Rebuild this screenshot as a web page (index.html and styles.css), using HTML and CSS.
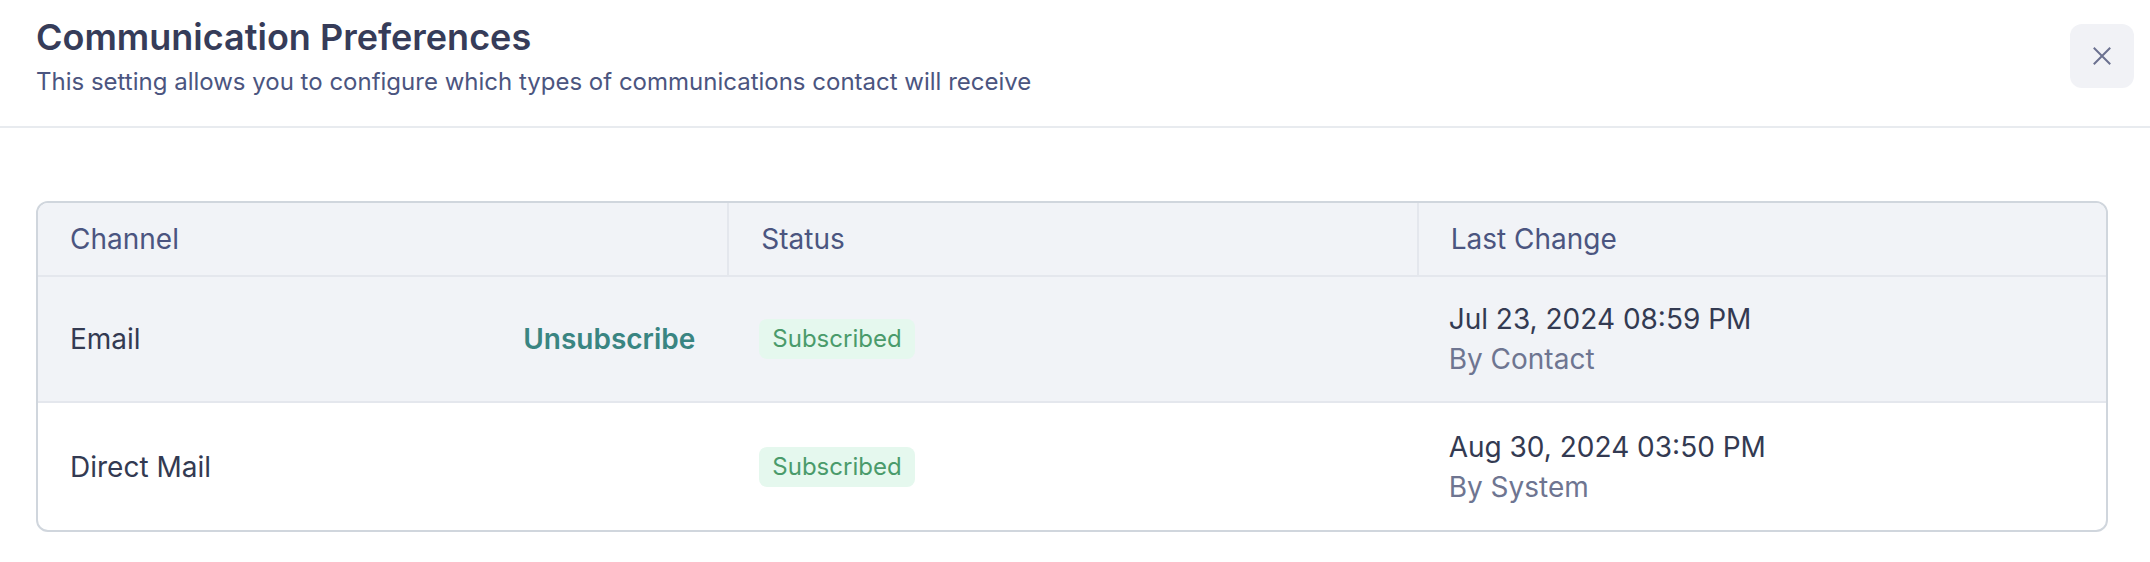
FILE: index.html
```html
<!DOCTYPE html>
<html lang="en">
<head>
<meta charset="utf-8">
<title>Communication Preferences</title>
<link rel="stylesheet" href="styles.css">
</head>
<body>
<div class="modal">
  <header class="modal-header">
    <div class="heading">
      <h1 class="title">Communication Preferences</h1>
      <p class="subtitle">This setting allows you to configure which types of communications contact will receive</p>
    </div>
    <button class="close-btn" aria-label="Close">
      <svg width="18" height="18" viewBox="0 0 18 18" fill="none" stroke="#6b7190" stroke-width="2" stroke-linecap="square">
        <path d="M1.5 1.5 L16.5 16.5 M16.5 1.5 L1.5 16.5"/>
      </svg>
    </button>
  </header>
  <section class="modal-body">
    <div class="table">
      <div class="row head">
        <div class="cell">Channel</div>
        <div class="cell">Status</div>
        <div class="cell">Last Change</div>
      </div>
      <div class="row hovered">
        <div class="cell channel">
          <span>Email</span>
          <a class="unsub" href="#">Unsubscribe</a>
        </div>
        <div class="cell"><span class="badge">Subscribed</span></div>
        <div class="cell change">
          <span class="date">Jul 23, 2024 08:59 PM</span>
          <span class="by">By Contact</span>
        </div>
      </div>
      <div class="row last">
        <div class="cell channel">
          <span>Direct Mail</span>
        </div>
        <div class="cell"><span class="badge">Subscribed</span></div>
        <div class="cell change">
          <span class="date">Aug 30, 2024 03:50 PM</span>
          <span class="by">By System</span>
        </div>
      </div>
    </div>
  </section>
</div>
</body>
</html>
```

FILE: styles.css
```css
* { box-sizing: border-box; }

html, body {
  margin: 0;
  padding: 0;
  background: #ffffff;
  font-family: "Inter", "Noto Sans", "Liberation Sans", sans-serif;
}

.modal-header {
  display: flex;
  justify-content: space-between;
  align-items: flex-start;
  padding: 15px 16px 28px 36px;
  border-bottom: 2px solid #e8ebef;
}

.title {
  margin: 0;
  font-size: 36px;
  line-height: 44px;
  font-weight: 600;
  color: #363c59;
}

.subtitle {
  margin: 7px 0 0;
  font-size: 24px;
  line-height: 32px;
  font-weight: 400;
  color: #4b5580;
}

.close-btn {
  margin-top: 9px;
  width: 64px;
  height: 64px;
  border: none;
  border-radius: 12px;
  background: #f1f2f6;
  display: flex;
  align-items: center;
  justify-content: center;
  padding: 0;
}

.modal-body {
  padding: 73px 42px 0 36px;
}

.table {
  border: 2px solid #d0d6dd;
  border-radius: 12px;
  overflow: hidden;
}

.row {
  display: grid;
  grid-template-columns: repeat(3, 1fr);
  border-top: 2px solid #e4e7ed;
  font-size: 28px;
  line-height: 40px;
  color: #333a52;
}

.row.head {
  border-top: none;
  background: #f1f3f7;
  color: #4b5580;
}

.row.hovered {
  background: #f1f3f7;
}

.cell {
  padding: 22px 32px;
  display: flex;
  align-items: center;
}

.row.last .cell {
  padding: 24px 32px 23px;
}

.head .cell {
  padding: 16px 32px;
}

.head .cell + .cell {
  border-left: 2px solid #e4e7ed;
}

.channel {
  justify-content: space-between;
}

.unsub {
  color: #3a8582;
  font-weight: 600;
  text-decoration: none;
}

.badge {
  display: inline-block;
  padding: 4px 13px;
  border-radius: 8px;
  background: #e5f8ee;
  color: #4a9b6b;
  font-size: 24px;
  line-height: 32px;
  font-weight: 400;
}

.change {
  flex-direction: column;
  align-items: flex-start;
}

.date {
  color: #333a52;
}

.by {
  color: #6e7591;
}
```
